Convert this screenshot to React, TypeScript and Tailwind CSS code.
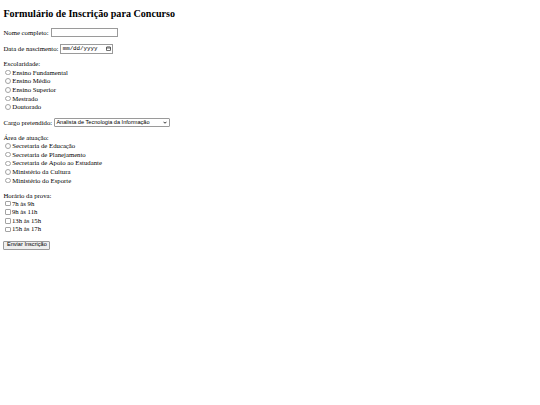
import { useState } from "react";

const escolaridades = [
  "Ensino Fundamental",
  "Ensino Médio",
  "Ensino Superior",
  "Mestrado",
  "Doutorado",
];

const areas = [
  "Secretaria de Educação",
  "Secretaria de Planejamento",
  "Secretaria de Apoio ao Estudante",
  "Ministério da Cultura",
  "Ministério do Esporte",
];

const horarios = ["7h às 9h", "9h às 11h", "13h às 15h", "15h às 17h"];

function Radio({ label, checked, onClick }: { label: string; checked: boolean; onClick: () => void }) {
  return (
    <label className="flex h-[8.65px] items-center cursor-pointer" onClick={onClick}>
      <span className="ml-[2.1px] mr-[1.3px] flex h-[5.5px] w-[5.5px] items-center justify-center rounded-full border-[0.6px] border-[#a3a3a3] bg-white">
        {checked && <span className="h-[2.8px] w-[2.8px] rounded-full bg-[#0075ff]" />}
      </span>
      <span>{label}</span>
    </label>
  );
}

function Check({ label, checked, onClick }: { label: string; checked: boolean; onClick: () => void }) {
  return (
    <label className="flex h-[8.55px] items-center cursor-pointer" onClick={onClick}>
      <span
        className={`ml-[1.7px] mr-[1.3px] h-[5.5px] w-[5.5px] rounded-[1px] border-[0.6px] ${
          checked ? "border-[#0075ff] bg-[#0075ff]" : "border-[#a3a3a3] bg-white"
        }`}
      />
      <span>{label}</span>
    </label>
  );
}

export default function App() {
  const [nome, setNome] = useState("");
  const [escolaridade, setEscolaridade] = useState("");
  const [area, setArea] = useState("");
  const [horas, setHoras] = useState<string[]>([]);

  const toggleHora = (h: string) =>
    setHoras((prev) => (prev.includes(h) ? prev.filter((x) => x !== h) : [...prev, h]));

  return (
    <div className="min-h-[405px] w-[540px] bg-white px-[3.4px] pt-[8.2px] text-[6.75px] leading-[7.76px] text-black [font-family:'Liberation_Serif',serif]">
      <h1 className="text-[10.1px] font-bold leading-[11.6px]">Formulário de Inscrição para Concurso</h1>

      <form className="mt-[8.2px] flex flex-col gap-[6.75px]" onSubmit={(e) => e.preventDefault()}>
        {/* nome */}
        <div className="flex h-[9px] items-center">
          <span>Nome completo:</span>
          <input
            type="text"
            value={nome}
            onChange={(e) => setNome(e.target.value)}
            className="ml-[2px] h-[9px] w-[67px] border-[0.7px] border-[#9a9a9a] bg-white px-[1px] text-[5.6px] outline-none"
          />
        </div>

        {/* data */}
        <div className="flex h-[10px] items-center">
          <span>Data de nascimento:</span>
          <div className="ml-[1.8px] flex h-[10px] w-[53px] items-center justify-between border-[0.7px] border-[#9a9a9a] px-[1.4px] [font-family:'Liberation_Mono',monospace] text-[5.8px]">
            <span>mm/dd/yyyy</span>
            <svg width="5" height="5" viewBox="0 0 10 10" fill="none" stroke="black" strokeWidth="1.2">
              <rect x="1" y="1.8" width="8" height="7.4" rx="0.8" />
              <line x1="1" y1="4" x2="9" y2="4" />
            </svg>
          </div>
        </div>

        {/* escolaridade */}
        <div>
          <div>Escolaridade:</div>
          {escolaridades.map((e) => (
            <Radio key={e} label={e} checked={escolaridade === e} onClick={() => setEscolaridade(e)} />
          ))}
        </div>

        {/* cargo */}
        <div className="flex h-[9px] items-center">
          <span>Cargo pretendido:</span>
          <div className="ml-[1.8px] flex h-[9px] w-[116px] items-center justify-between rounded-[1px] border-[0.7px] border-[#9a9a9a] pl-[1.4px] pr-[2.2px] [font-family:'Liberation_Sans',Arial,sans-serif] text-[5.6px]">
            <span>Analista de Tecnologia da Informação</span>
            <svg width="4" height="3" viewBox="0 0 8 6" fill="none" stroke="black" strokeWidth="1.6">
              <path d="M1 1.5 L4 4.5 L7 1.5" />
            </svg>
          </div>
        </div>

        {/* area */}
        <div>
          <div>Área de atuação:</div>
          {areas.map((a) => (
            <Radio key={a} label={a} checked={area === a} onClick={() => setArea(a)} />
          ))}
        </div>

        {/* horario */}
        <div>
          <div>Horário da prova:</div>
          {horarios.map((h) => (
            <Check key={h} label={h} checked={horas.includes(h)} onClick={() => toggleHora(h)} />
          ))}
        </div>

        <div>
          <button
            type="submit"
            className="h-[9px] rounded-[1px] border-[0.7px] border-[#9a9a9a] bg-[#efefef] px-[2.6px] [font-family:'Liberation_Sans',Arial,sans-serif] text-[5.6px] leading-none"
          >
            Enviar Inscrição
          </button>
        </div>
      </form>
    </div>
  );
}
